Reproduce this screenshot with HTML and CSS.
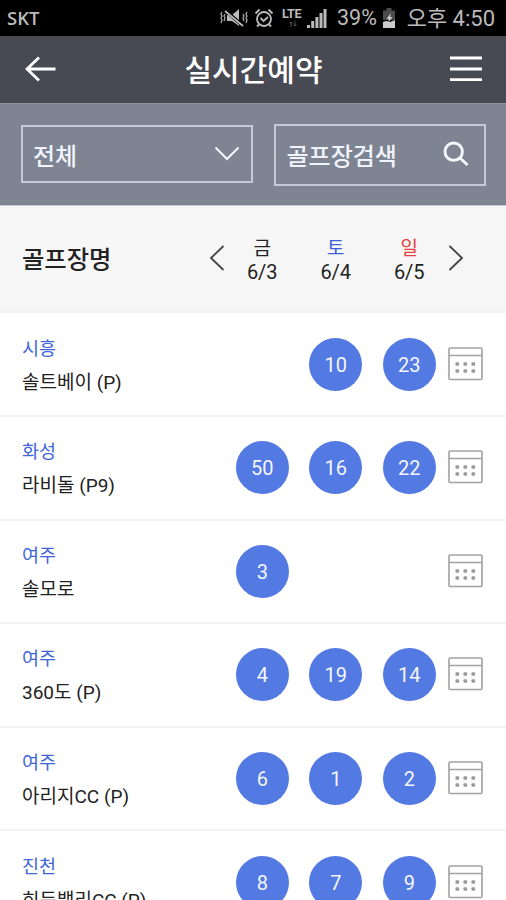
FILE: index.html
```html
<!DOCTYPE html>
<html lang="ko">
<head>
<meta charset="utf-8">
<title>실시간예약</title>
<link rel="stylesheet" href="styles.css">
</head>
<body>
<svg class="defs" width="0" height="0">
  <symbol id="calendar" viewBox="0 0 36 34">
    <g fill="none" stroke="#a2a2a2" stroke-width="1.6"><rect x="1" y="1" width="33" height="31.500" rx="1.2"/><path d="M1 8.500h33"/></g>
    <g fill="#999"><rect x="7.500" y="15.200" width="3.600" height="3.600" rx="1"/><rect x="15.500" y="15.200" width="3.600" height="3.600" rx="1"/><rect x="23.500" y="15.200" width="3.600" height="3.600" rx="1"/><rect x="7.500" y="22.200" width="3.600" height="3.600" rx="1"/><rect x="15.500" y="22.200" width="3.600" height="3.600" rx="1"/><rect x="23.500" y="22.200" width="3.600" height="3.600" rx="1"/></g>
  </symbol>
</svg>
<div class="screen">
  <div class="status">
    <span class="carrier">SKT</span>
    <svg class="mute" width="29" height="20" viewBox="0 0 29 20"><path d="M7 7h5l7-6v17l-7-5H7z" fill="#bbb"/><path d="M6 3l17 15" stroke="#000" stroke-width="3.5"/><path d="M5 3l18 15" stroke="#bbb" stroke-width="1.7"/><path d="M2 4l-1 2 1 2-1 2 1 2-1 3M5 6l-1 2 1 2-1 3M23 6l1 2-1 2 1 3M27 4l-1 2 1 2-1 2 1 2-1 3" fill="none" stroke="#aaa" stroke-width="1.3"/></svg>
    <svg class="alarm" width="20" height="20" viewBox="0 0 20 20"><g fill="none" stroke="#bbb" stroke-width="1.8"><circle cx="10" cy="11" r="7"/><path d="M1.5 5.5l4-4M18.5 5.5l-4-4M6.5 10l3 3 4.5-4M5 16.5l-2 2M15 16.5l2 2"/></g></svg>
    <span class="lte">LTE<svg width="10" height="6" viewBox="0 0 10 6"><path d="M3 6V1M1.5 2.5L3 1l1.500 1.500M7 0v5M5.500 3.500L7 5l1.500-1.500" fill="none" stroke="#555"/></svg></span>
    <svg class="signal" width="20" height="19" viewBox="0 0 20 19"><path d="M0 16h3v3H0zM4.200 12h3v7h-3zM8.400 8h3v11h-3zM12.500 4h3v15h-3zM16.500 0h3v19h-3z" fill="#bbb"/></svg>
    <span class="percent">39%</span>
    <svg class="battery" width="12" height="20" viewBox="0 0 12 20"><path d="M0 2.500h3.500V0h5v2.500H12V12H0z" fill="#4b4b4b"/><path d="M0 14l3-1 4 1 5-2v8H0z" fill="#ccc"/><path d="M8 5L3.500 11h2.500l-1 4 4.500-6H7z" fill="#ccc"/></svg>
    <span class="clock">오후 4:50</span>
  </div>
  <header class="bar">
    <svg class="back" width="32" height="26" viewBox="0 0 32 26"><path d="M14 1.500L2 13l12 11.500M2 13h28.500" fill="none" stroke="#fff" stroke-width="2.800"/></svg>
    <h1>실시간예약</h1>
    <svg class="menu" width="32" height="28" viewBox="0 0 32 28"><path d="M0 3h32M0 14h32M0 24.700h32" stroke="#fff" stroke-width="2.800"/></svg>
  </header>
  <div class="filters">
    <div class="box select"><span>전체</span><svg width="26" height="16" viewBox="0 0 26 16"><path d="M1.500 1.500L13 13 24.500 1.500" fill="none" stroke="#f5f7ff" stroke-width="2"/></svg></div>
    <div class="box search"><span>골프장검색</span><svg width="26" height="26" viewBox="0 0 26 26"><g fill="none" stroke="#f5f7ff" stroke-width="2.900"><circle cx="10.700" cy="10.700" r="8.700"/><path d="M17 17l7.500 7"/></g></svg></div>
  </div>
  <div class="grid head">
    <strong>골프장명</strong>
    <svg class="prev" width="16" height="26" viewBox="0 0 16 26"><path d="M14.500 1L2 13l12.500 12" fill="none" stroke="#444" stroke-width="1.800"/></svg>
    <div class="day">금<b>6/3</b></div>
    <div class="day sat">토<b>6/4</b></div>
    <div class="day sun">일<b>6/5</b></div>
    <svg class="next" width="16" height="26" viewBox="0 0 16 26"><path d="M1.500 1L14 13 1.500 25" fill="none" stroke="#444" stroke-width="1.800"/></svg>
  </div>
  <div class="grid row"><div class="club"><em>시흥</em><p>솔트베이 (P)</p></div><i></i><a>10</a><a>23</a><svg class="cal"><use href="#calendar"/></svg></div>
  <div class="grid row"><div class="club"><em>화성</em><p>라비돌 (P9)</p></div><a>50</a><a>16</a><a>22</a><svg class="cal"><use href="#calendar"/></svg></div>
  <div class="grid row"><div class="club"><em>여주</em><p>솔모로</p></div><a>3</a><i></i><i></i><svg class="cal"><use href="#calendar"/></svg></div>
  <div class="grid row"><div class="club"><em>여주</em><p>360도 (P)</p></div><a>4</a><a>19</a><a>14</a><svg class="cal"><use href="#calendar"/></svg></div>
  <div class="grid row"><div class="club"><em>여주</em><p>아리지CC (P)</p></div><a>6</a><a>1</a><a>2</a><svg class="cal"><use href="#calendar"/></svg></div>
  <div class="grid row"><div class="club"><em>진천</em><p>히든밸리CC (P)</p></div><a>8</a><a>7</a><a>9</a><svg class="cal"><use href="#calendar"/></svg></div>
</div>
</body>
</html>
```
FILE: styles.css
```css
* { box-sizing: border-box; }
html, body { margin: 0; height: 900px; overflow: hidden; }
body { font-family: Roboto, "Noto Sans CJK KR", sans-serif; color: #222; background: #fff; }
.defs { display: block; }
svg { flex: none; display: block; }
.screen { width: 506px; height: 900px; overflow: hidden; }

.status { height: 36px; background: #000; color: #bbb; display: flex; align-items: center; padding: 0 11px 0 7px; line-height: 36px; white-space: nowrap; }
.carrier { font: 600 18.5px/36px "Open Sans", sans-serif; width: 213px; }
.alarm { margin-left: 5px; }
.lte { font-size: 12.5px; font-weight: 700; line-height: 12px; width: 22px; margin-left: 8px; height: 21px; letter-spacing: -.3px; }
.lte svg { margin: 1px auto 0; }
.signal { margin-left: 3px; }
.percent { font-size: 21.5px; margin-left: 10px; width: 43px; }
.battery { margin-left: 3px; }
.clock { font-size: 22px; margin-left: auto; padding-top: 2px; }

.bar { height: 67px; background: #474a53; display: flex; align-items: center; justify-content: space-between; padding: 0 24px 0 25px; }
.bar h1 { margin: 0; padding-top: 3px; font-size: 30px; line-height: 64px; font-weight: 500; color: #fff; }
.back, .menu { margin-bottom: 1px; }

.filters { height: 103px; background: #7e8492; border-top: 1px solid #8d93a1; border-bottom: 1px solid #c5c9d6; display: flex; gap: 21px; padding: 20px 20px 0 21px; }
.box { border: 2px solid #c4c9d5; display: flex; align-items: center; justify-content: space-between; color: #f0f3fc; font-size: 24px; font-weight: 500; padding: 0 11px 0 10px; }
.select { width: 233px; height: 58px; margin-top: 1px; }
.search { width: 212px; height: 62px; padding-right: 15px; padding-bottom: 2px; }

.grid { display: grid; grid-template-columns: 225.5px 73.5px 73.5px 73.5px 60px; align-items: center; justify-items: center; }
.head { height: 105.4px; background: #f6f6f6; grid-template-columns: 208.5px 17px 73.5px 73.5px 73.5px 60px; }
.head strong { justify-self: start; padding: 3px 0 0 22px; font-size: 24.3px; font-weight: 500; line-height: 36px; }
.prev, .next { justify-self: start; margin-bottom: 1px; }
.next { margin-left: 2px; }
.day { font-size: 19px; line-height: 24px; text-align: center; padding-top: 3px; }
.day b { display: block; font-weight: 400; font-size: 20px; line-height: 22px; color: #222; }
.sat { color: #3d5fd6; }
.sun { color: #e8403c; }

.row { height: 103.6px; border-top: 2px solid #f3f3f3; }
.club { justify-self: start; padding: 3px 0 0 22px; white-space: nowrap; }
.club em { display: block; font-style: normal; font-size: 18.5px; line-height: 34px; color: #3f66d8; }
.club p { margin: 0; font-size: 19px; line-height: 34px; }
.row a { width: 53px; height: 53px; border-radius: 50%; background: #5379e2; color: #f3f6ff; font-size: 20px; line-height: 54px; text-align: center; }
.cal { width: 36px; height: 34px; justify-self: start; margin: 0 0 1px 2px; }
```
